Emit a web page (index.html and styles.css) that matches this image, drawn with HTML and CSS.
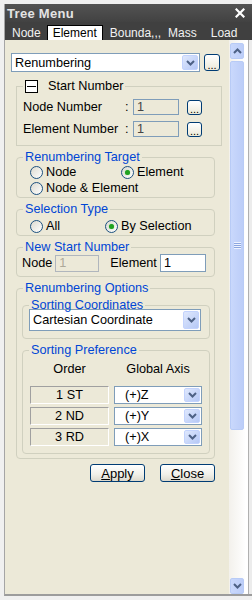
FILE: index.html
```html
<!DOCTYPE html>
<html lang="en">
<head>
    <meta charset="UTF-8">
    <title>Tree Menu</title>
    <link rel="stylesheet" href="styles.css">
</head>
<body>
    <div class="window">
        <div class="titlebar">
            <span class="title">Tree Menu</span>
            <svg class="close" width="10" height="10" viewBox="0 0 10 10">
                <path d="M1.5 1.5L8.5 8.5M8.5 1.5L1.5 8.5" stroke="#fff" stroke-width="2.2" stroke-linecap="square"></path>
            </svg>
        </div>

        <div class="tabs">
            <span class="tab">Node</span>
            <span class="tab active">Element</span>
            <span class="tab">Bounda,,,</span>
            <span class="tab">Mass</span>
            <span class="tab">Load</span>
        </div>

        <div class="main">
            <div class="panel">
                <!-- 功能选择 -->
                <div class="top-row">
                    <div class="combo combo-main">
                        <span class="combo-text">Renumbering</span>
                        <span class="combo-btn">
                            <svg width="9" height="6" viewBox="0 0 9 6"><path d="M1 1L4.5 4.5L8 1" fill="none" stroke="#4d6185" stroke-width="2"></path></svg>
                        </span>
                    </div>
                    <button class="dots">...</button>
                </div>

                <!-- 起始编号 -->
                <fieldset class="group group-start">
                    <legend class="legend-start"><span class="toggle"></span>Start Number</legend>
                    <div class="num-row">
                        <span class="num-label">Node Number</span>
                        <span class="colon">:</span>
                        <span class="field field-gray">1</span>
                        <button class="dots dots-small">...</button>
                    </div>
                    <div class="num-row">
                        <span class="num-label">Element Number</span>
                        <span class="colon">:</span>
                        <span class="field field-gray">1</span>
                        <button class="dots dots-small">...</button>
                    </div>
                </fieldset>

                <fieldset class="group">
                    <legend>Renumbering Target</legend>
                    <div class="radio-row">
                        <label class="radio col-target"><span class="dot"></span>Node</label>
                        <label class="radio"><span class="dot checked"></span>Element</label>
                    </div>
                    <div class="radio-row radio-last">
                        <label class="radio"><span class="dot"></span>Node &amp; Element</label>
                    </div>
                </fieldset>

                <fieldset class="group">
                    <legend>Selection Type</legend>
                    <div class="radio-row radio-single">
                        <label class="radio col-select"><span class="dot"></span>All</label>
                        <label class="radio"><span class="dot checked"></span>By Selection</label>
                    </div>
                </fieldset>

                <fieldset class="group">
                    <legend>New Start Number</legend>
                    <div class="new-row">
                        <span>Node</span>
                        <span class="field field-disabled new-node">1</span>
                        <span>Element</span>
                        <span class="field field-white new-elem">1</span>
                    </div>
                </fieldset>

                <fieldset class="group group-options">
                    <legend>Renumbering Options</legend>

                    <fieldset class="group sub-group">
                        <legend>Sorting Coordinates</legend>
                        <div class="combo combo-coord">
                            <span class="combo-text">Cartesian Coordinate</span>
                            <span class="combo-btn">
                                <svg width="9" height="6" viewBox="0 0 9 6"><path d="M1 1L4.5 4.5L8 1" fill="none" stroke="#4d6185" stroke-width="2"></path></svg>
                            </span>
                        </div>
                    </fieldset>

                    <fieldset class="group sub-group">
                        <legend>Sorting Preference</legend>
                        <div class="pref-head">
                            <span class="pref-order">Order</span>
                            <span class="pref-axis">Global Axis</span>
                        </div>
                        <div class="pref-row">
                            <span class="order-cell">1 ST</span>
                            <div class="combo combo-axis">
                                <span class="combo-text">(+)Z</span>
                                <span class="combo-btn"><svg width="9" height="6" viewBox="0 0 9 6"><path d="M1 1L4.5 4.5L8 1" fill="none" stroke="#4d6185" stroke-width="2"></path></svg></span>
                            </div>
                        </div>
                        <div class="pref-row">
                            <span class="order-cell">2 ND</span>
                            <div class="combo combo-axis">
                                <span class="combo-text">(+)Y</span>
                                <span class="combo-btn"><svg width="9" height="6" viewBox="0 0 9 6"><path d="M1 1L4.5 4.5L8 1" fill="none" stroke="#4d6185" stroke-width="2"></path></svg></span>
                            </div>
                        </div>
                        <div class="pref-row">
                            <span class="order-cell">3 RD</span>
                            <div class="combo combo-axis">
                                <span class="combo-text">(+)X</span>
                                <span class="combo-btn"><svg width="9" height="6" viewBox="0 0 9 6"><path d="M1 1L4.5 4.5L8 1" fill="none" stroke="#4d6185" stroke-width="2"></path></svg></span>
                            </div>
                        </div>
                    </fieldset>
                </fieldset>

                <div class="actions">
                    <button class="btn"><u>A</u>pply</button>
                    <button class="btn"><u>C</u>lose</button>
                </div>
            </div>

            <!-- 滚动条 -->
            <div class="scrollbar">
                <span class="sb-btn">
                    <svg width="9" height="6" viewBox="0 0 9 6"><path d="M1 5L4.5 1.5L8 5" fill="none" stroke="#4d6185" stroke-width="2"></path></svg>
                </span>
                <span class="sb-thumb">
                    <span class="grip"></span>
                </span>
                <span class="sb-track"></span>
                <span class="sb-btn">
                    <svg width="9" height="6" viewBox="0 0 9 6"><path d="M1 1L4.5 4.5L8 1" fill="none" stroke="#4d6185" stroke-width="2"></path></svg>
                </span>
            </div>
            <div class="edge"></div>
        </div>
    </div>
</body>
</html>
```

FILE: styles.css
```css
* {
    box-sizing: border-box;
}

body {
    margin: 0;
    background-color: #f0f0f0;
    font-family: "Liberation Sans", Arial, sans-serif;
    font-size: 12.7px;
    color: #000;
}

.window {
    margin: 4px 0 0 4px;
    height: 592px;
    border-left: 1px solid #a5a5a5;
    border-bottom: 2px solid #9c9c9c;
    display: flex;
    flex-direction: column;
}

.titlebar {
    height: 18px;
    background: linear-gradient(#535353, #424242);
    display: flex;
    align-items: center;
    justify-content: space-between;
    padding: 0 7px 0 2px;
}

.title {
    color: #e4e4e4;
    font-weight: bold;
    font-size: 13px;
    letter-spacing: 0.3px;
}

.tabs {
    height: 18px;
    background: #404040;
    display: flex;
    align-items: flex-end;
    padding-left: 1px;
}

.tab {
    color: #f2f2f2;
    font-size: 12px;
    height: 15px;
    line-height: 14px;
    padding: 0 5px;
    border: 1px solid transparent;
    border-bottom: none;
}

.tab:nth-child(3) { margin-left: 1px; }
.tab:nth-child(4) { margin-left: -5px; }
.tab:nth-child(5) { margin-left: 2px; }

.tab.active {
    background: #fff;
    color: #000;
    border-color: #000;
}

.main {
    flex: 1;
    display: flex;
    min-height: 0;
}

.panel {
    flex: 1;
    background: #ece9d8;
    padding: 13px 6px 0 6px;
    display: flex;
    flex-direction: column;
}

.top-row {
    display: flex;
    align-items: center;
    gap: 4px;
    height: 19px;
}

/* 下拉框 */
.combo {
    background: #fff;
    border: 1px solid #7f9db9;
    display: flex;
    align-items: center;
    justify-content: space-between;
    padding-left: 3px;
}

.combo-main {
    width: 189px;
    height: 19px;
}

.combo-btn {
    width: 16px;
    align-self: stretch;
    margin: 1px;
    border: 1px solid #c3d3fd;
    border-radius: 2px;
    background: linear-gradient(135deg, #dfe8fd, #b5c8f6);
    display: flex;
    align-items: center;
    justify-content: center;
}

.dots {
    width: 16px;
    height: 17px;
    padding: 0;
    border: 1px solid #003c74;
    border-radius: 3px;
    background: linear-gradient(#fff, #ece9d8);
    font-family: inherit;
    font-size: 11px;
    line-height: 20px;
    color: #000;
}

.dots-small {
    width: 15px;
    height: 15px;
    line-height: 17px;
    margin-left: 8px;
}

/* 分组框 */
.group {
    margin: 4px 8px 0 5px;
    padding: 0;
    border: 1px solid #d0d0bf;
    border-radius: 4px;
    min-width: 0;
}

.group legend {
    padding: 0 2px;
    margin-left: 6px;
    color: #0046d5;
    line-height: 14px;
}

.group-start {
    margin: 6px 1px 0 5px;
    border-radius: 0;
    padding: 5px 0 8px 6px;
}

.group-start legend.legend-start {
    color: #000;
    line-height: 16px;
    margin-left: 0;
    display: flex;
    align-items: center;
}

.toggle {
    width: 13px;
    height: 13px;
    border: 1px solid #000;
    margin-right: 10px;
    position: relative;
    background: #fff;
}

.toggle::after {
    content: "";
    position: absolute;
    left: 1px;
    right: 1px;
    top: 5px;
    height: 1px;
    background: #000;
}

.num-row {
    display: flex;
    align-items: center;
    height: 16px;
}

.num-row + .num-row {
    margin-top: 6px;
}

.num-label {
    width: 102px;
}

.colon {
    width: 8px;
}

.field {
    height: 16px;
    border: 1px solid #7f9db9;
    line-height: 14px;
    padding-left: 3px;
}

.num-row .field {
    width: 46px;
}

.field-gray {
    background: #ece9d8;
    color: #444;
}

.field-disabled {
    background: #ece9d8;
    border-color: #b0b6bd;
    color: #aca899;
}

.field-white {
    background: #fff;
}

.radio-row {
    display: flex;
    height: 16px;
    align-items: center;
    padding-left: 13px;
}

.radio-last {
    margin-bottom: 1px;
}

.radio-single {
    margin: 2px 0 1px;
}

.radio {
    display: flex;
    align-items: center;
}

.col-target {
    width: 91px;
}

.col-select {
    width: 75px;
}

.dot {
    width: 13px;
    height: 13px;
    border: 1px solid #1c5180;
    border-radius: 50%;
    background: linear-gradient(135deg, #dcdad0, #fff);
    margin-right: 3px;
    display: flex;
    align-items: center;
    justify-content: center;
}

.dot.checked::after {
    content: "";
    width: 5px;
    height: 5px;
    border-radius: 50%;
    background: #21a121;
    box-shadow: 0 0 1px #60d060;
}

.new-row {
    display: flex;
    align-items: center;
    height: 18px;
    padding-left: 5px;
    margin-bottom: 4px;
}

.new-node {
    width: 44px;
    height: 17px;
    margin: 0 11px 0 3px;
}

.new-elem {
    width: 46px;
    height: 18px;
    margin-left: 3px;
    line-height: 16px;
}

.group-options {
    padding-bottom: 4px;
}

.sub-group {
    margin: 3px 4px 0 5px;
}

.sub-group + .sub-group {
    margin-top: 4px;
}

.combo-coord {
    width: 172px;
    height: 22px;
    margin: -3px 0 7px 6px;
}

.pref-head {
    display: flex;
    height: 15px;
    margin: 5px 0 9px 7px;
}

.pref-order {
    width: 79px;
    text-align: center;
}

.pref-axis {
    width: 88px;
    margin-left: 5px;
    text-align: center;
}

.pref-row {
    display: flex;
    gap: 5px;
    height: 18px;
    margin-left: 7px;
}

.pref-row + .pref-row {
    margin-top: 3px;
}

.pref-row:last-child {
    margin-bottom: 7px;
}

.order-cell {
    width: 79px;
    text-align: center;
    line-height: 16px;
    border: 1px solid;
    border-color: #a0a0a0 #fff #fff #a0a0a0;
}

.combo-axis {
    width: 88px;
    height: 18px;
    padding-left: 10px;
}

.actions {
    display: flex;
    justify-content: flex-end;
    gap: 15px;
    margin: 5px 8px 0 0;
}

.btn {
    width: 55px;
    height: 18px;
    padding: 0;
    border: 1px solid #003c74;
    border-radius: 3px;
    background: linear-gradient(#fff, #f0efe8 60%, #dcd9cd);
    font-family: inherit;
    font-size: 13px;
    color: #000;
}

/* 滚动条 */
.scrollbar {
    width: 16px;
    display: flex;
    flex-direction: column;
    padding-top: 3px;
    padding-bottom: 0;
    background: linear-gradient(90deg, #f3f1ec, #fefefe);
}

.sb-btn,
.sb-thumb {
    border: 1px solid #b8cbf6;
    border-radius: 2px;
    background: linear-gradient(90deg, #c9d8fc, #bccdf8);
    display: flex;
    align-items: center;
    justify-content: center;
    margin: 0 1px;
}

.sb-btn {
    height: 16px;
    flex: none;
}

.sb-thumb {
    height: 369px;
    margin-top: 2px;
    flex: none;
}

.grip {
    width: 7px;
    height: 7px;
    background: repeating-linear-gradient(#eef3ff 0, #eef3ff 1px, #8ca6e0 1px, #8ca6e0 2px);
}

.sb-track {
    flex: 1;
}

.edge {
    width: 7px;
    background: linear-gradient(90deg, #fff 0, #fff 3px, #b0b0b0 3px, #b0b0b0 4px, #ececec 4px);
}
```
